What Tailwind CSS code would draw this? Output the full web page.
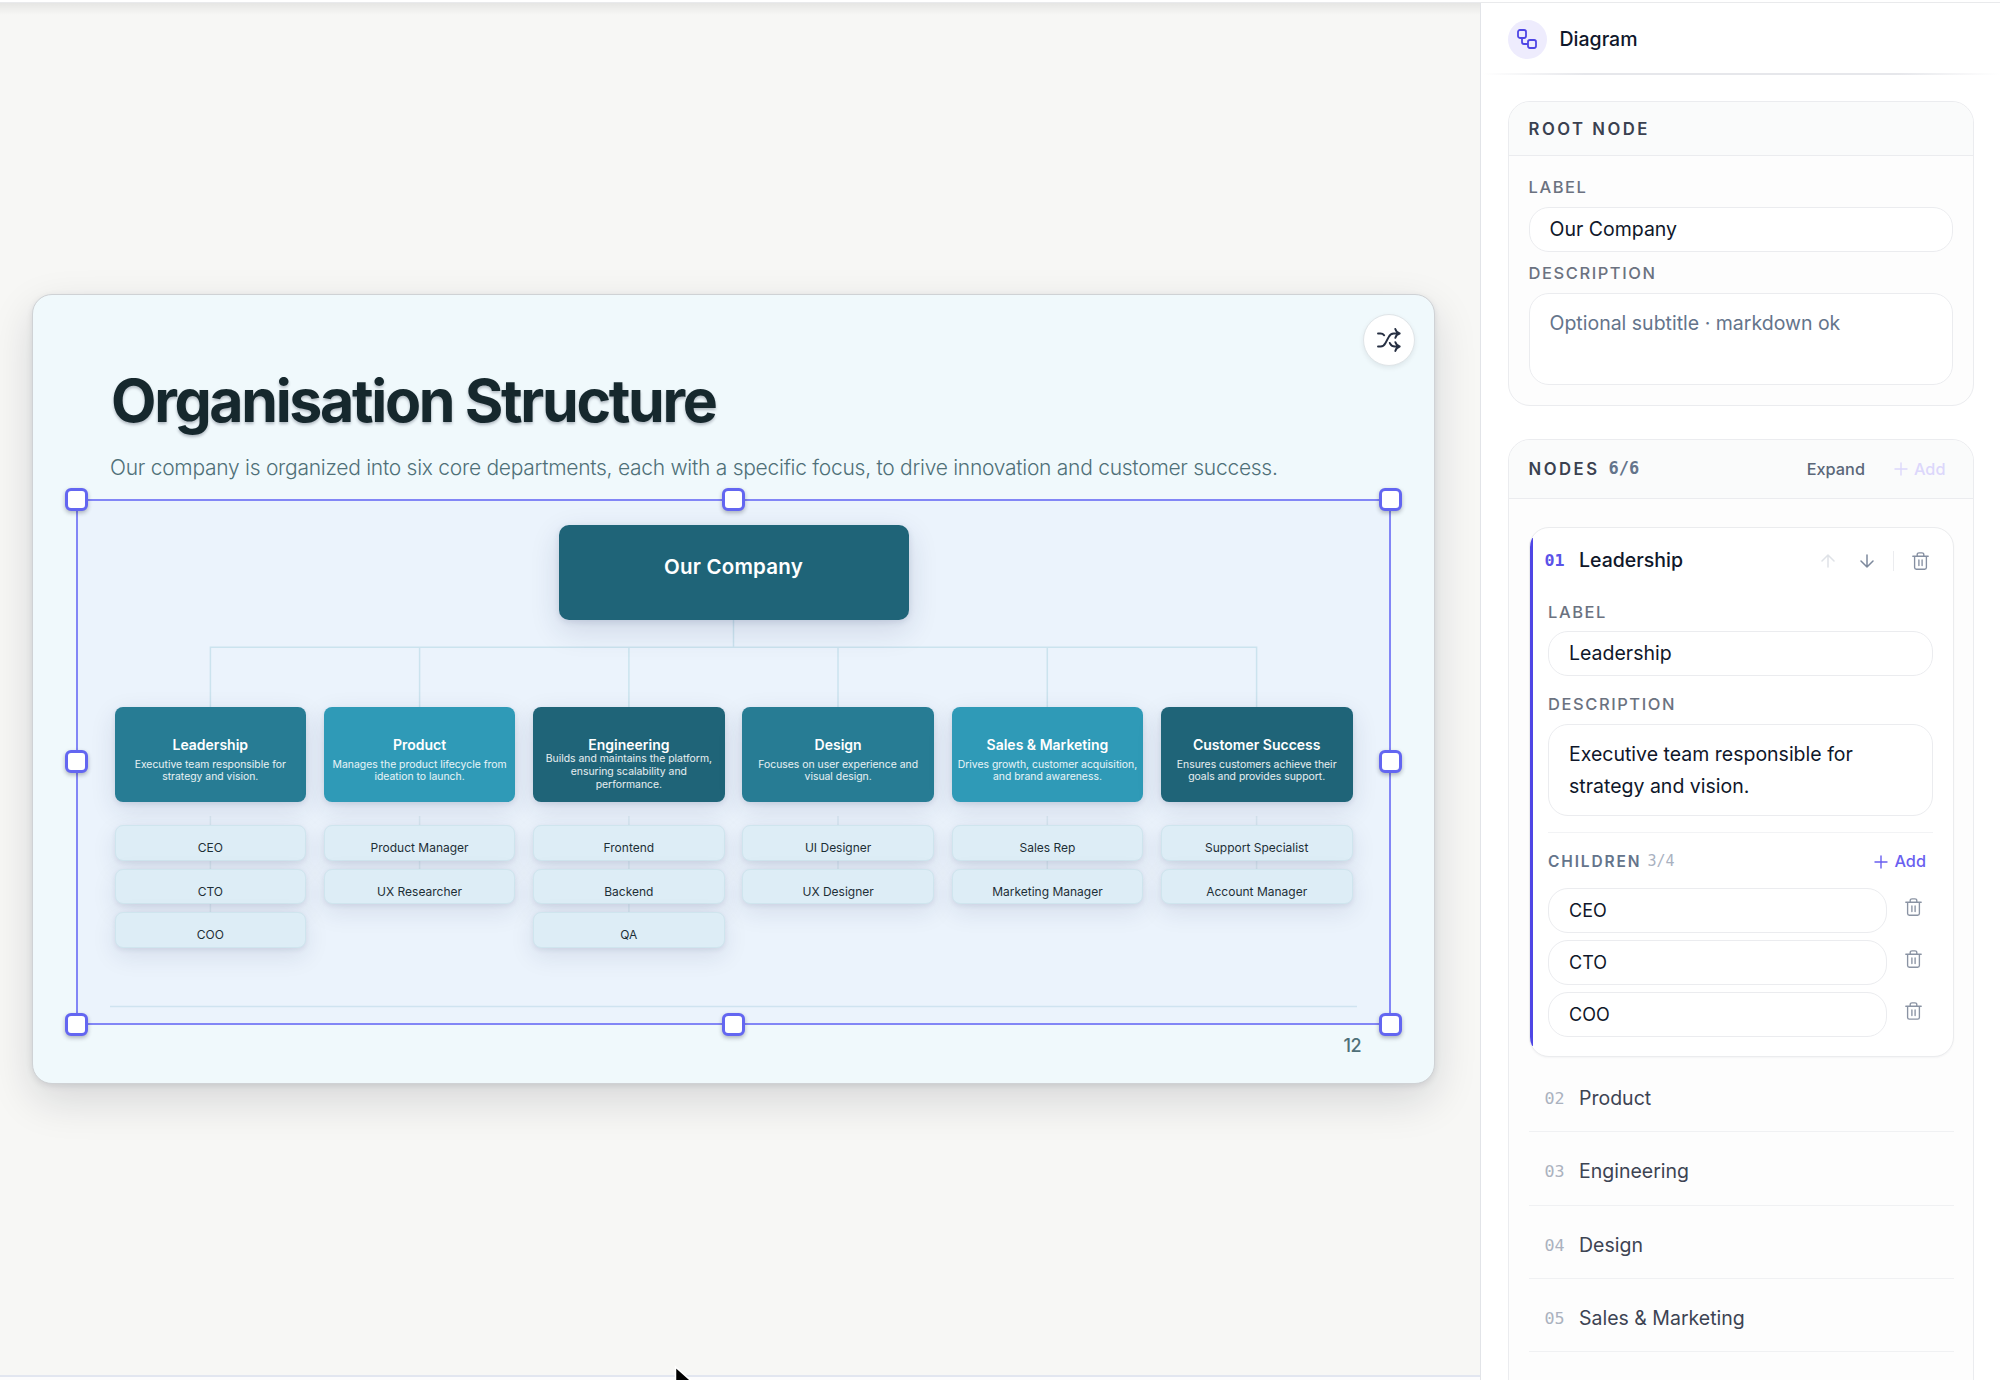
<!DOCTYPE html>
<html lang="en">
<head>
    <meta charset="UTF-8">
    <meta name="viewport" content="width=device-width, initial-scale=1.0">
    <title>Diagram Editor</title>
    <script src="https://cdn.jsdelivr.net/npm/@tailwindcss/browser@4"></script>
</head>
<body class="flex h-[1380px] w-[2000px] flex-col overflow-hidden bg-white font-['Inter',sans-serif] text-[#0f172a]">

<!-- Shared icons -->
<svg class="hidden">
    <symbol id="trash" viewBox="0 0 17 18" fill="none" stroke="currentColor" stroke-width="1.35" stroke-linecap="round" stroke-linejoin="round">
        <path d="M.8 4.2h15.4M2.6 4.4v11a1.8 1.8 0 0 0 1.8 1.8h8.2a1.8 1.8 0 0 0 1.8-1.8v-11M5.2 4V2.6A1.8 1.8 0 0 1 7 .8h3a1.8 1.8 0 0 1 1.8 1.8V4M6.9 8v5.6M10.1 8v5.6"/>
    </symbol>
    <symbol id="plus" viewBox="0 0 14 14" fill="none" stroke="currentColor" stroke-width="1.4" stroke-linecap="round">
        <path d="M7 1v12M1 7h12"/>
    </symbol>
</svg>

<div class="h-[3px] shrink-0 border-b border-[#e9eaec] bg-white"></div>

<div class="flex min-h-0 flex-1">
    <!-- Canvas -->
    <main class="relative flex w-[1480px] shrink-0 flex-col bg-[#f7f7f5]">
        <div class="absolute inset-x-0 top-0 h-3 bg-linear-to-b from-black/7 to-transparent"></div>

        <section class="relative mt-[291px] ml-8 h-[790px] w-[1403px] rounded-[20px] border border-[#cfd2d5] bg-[#f0f9fc] pt-[76px] shadow-[0_16px_44px_rgba(15,23,42,0.14),0_2px_6px_rgba(15,23,42,0.10)]">
            <h1 class="ml-[78px] h-[60px] w-max text-[59px] leading-[60px] font-bold tracking-[-0.0395em] text-[#16282d] text-shadow-[0_2px_3px_rgba(15,23,42,0.28)]">Organisation Structure</h1>
            <p class="mt-[22px] ml-[77px] h-[30px] w-max text-[21px] leading-[30px] font-light tracking-[-0.0126em] text-[#4f7078]">Our company is organized into six core departments, each with a specific focus, to drive innovation and customer success.</p>

            <!-- Selected diagram -->
            <div class="relative mt-4 ml-[43px] h-[526px] w-[1315px] border-2 border-[#8286f6] bg-[#ebf3fc]">
                <svg class="absolute top-0 left-0 h-[522px] w-[1311px]" fill="none" stroke="#cbe3ee" stroke-width="1.5">
                    <path d="M655.5 118v28M132.4 206V146.3H1178.6V206M341.6 146v60M550.9 146v60M760 146v60M969.3 146v60"/>
                    <path stroke="#d9e8f1" d="M132.4 315v100M341.6 315v60M550.9 315v100M760 315v60M969.3 315v60M1178.6 315v60"/>
                    <path stroke="#cfe3f0" stroke-width="1.3" d="M32 505.5H1279"/>
                </svg>

                <div class="relative mx-auto mt-6 flex h-[95px] w-[350px] justify-center rounded-[10px] bg-[#1f6478] pt-[28px] text-[20.5px] leading-7 font-semibold tracking-[0.01em] text-white shadow-[0_10px_30px_rgba(30,41,90,0.14),0_2px_6px_rgba(30,41,90,0.12)]"><span>Our Company</span></div>
                <div id="columns" class="relative mt-[87px] ml-[36.5px] grid w-[1238px] grid-cols-6 gap-[17.7px]"></div>

                <!-- Resize handles -->
                <i class="absolute -top-[13px] -left-[13px] size-[23px] rounded-[6px] border-[3px] border-[#6366f1] bg-white shadow-[0_2px_4px_rgba(15,23,42,0.3)]"></i>
                <i class="absolute -top-[13px] left-[644px] size-[23px] rounded-[6px] border-[3px] border-[#6366f1] bg-white shadow-[0_2px_4px_rgba(15,23,42,0.3)]"></i>
                <i class="absolute -top-[13px] -right-[13px] size-[23px] rounded-[6px] border-[3px] border-[#6366f1] bg-white shadow-[0_2px_4px_rgba(15,23,42,0.3)]"></i>
                <i class="absolute top-[249px] -left-[13px] size-[23px] rounded-[6px] border-[3px] border-[#6366f1] bg-white shadow-[0_2px_4px_rgba(15,23,42,0.3)]"></i>
                <i class="absolute top-[249px] -right-[13px] size-[23px] rounded-[6px] border-[3px] border-[#6366f1] bg-white shadow-[0_2px_4px_rgba(15,23,42,0.3)]"></i>
                <i class="absolute -bottom-[13px] -left-[13px] size-[23px] rounded-[6px] border-[3px] border-[#6366f1] bg-white shadow-[0_2px_4px_rgba(15,23,42,0.3)]"></i>
                <i class="absolute -bottom-[13px] left-[644px] size-[23px] rounded-[6px] border-[3px] border-[#6366f1] bg-white shadow-[0_2px_4px_rgba(15,23,42,0.3)]"></i>
                <i class="absolute -right-[13px] -bottom-[13px] size-[23px] rounded-[6px] border-[3px] border-[#6366f1] bg-white shadow-[0_2px_4px_rgba(15,23,42,0.3)]"></i>
            </div>

            <div class="mt-2 mr-[73px] text-right text-[18px] leading-[25px] font-medium tracking-[-0.03em] text-[#4f7078]">12</div>

            <button class="absolute top-[19px] right-[19px] flex size-[52px] items-center justify-center rounded-full border-[1.5px] border-[#e0e5e8] bg-white shadow-[0_2px_5px_rgba(15,23,42,0.08)]">
                <svg class="size-6" viewBox="0 0 24 24" fill="none" stroke="#262f42" stroke-width="1.9" stroke-linecap="round" stroke-linejoin="round">
                    <path d="M1 5.5h2.5c1.500 0 2.700.5 3.700 1.800M1 18.500h2.500c2.500 0 3.900-1.200 5-3.500l3.200-6c1.100-2.200 2.600-3.500 5.100-3.500h5.700M12.800 14.900l.4.900c1 1.900 2.500 2.700 4.700 2.700h4.600M18.300 1c.6 2.200 2 3.800 4.400 4.500-2.400.7-3.800 2.200-4.400 4.400M18.300 14.100c.6 2.200 2 3.700 4.400 4.400-2.400.7-3.800 2.300-4.400 4.500"/>
                </svg>
            </button>
        </section>

        <div class="absolute inset-x-0 bottom-0 h-[5px] border-t-2 border-[#e2e6f0] bg-[#fcfcfd]"></div>
    </main>

    <!-- Properties panel -->
    <aside class="flex w-[520px] flex-col border-l border-[#e2e4e8] bg-white px-[26.5px]">
        <header class="flex h-[70px] shrink-0 items-center gap-[13px] pt-[2px]">
            <span class="flex size-[39px] items-center justify-center rounded-full bg-[#eeecfd]">
                <svg class="size-5" viewBox="0 0 20 20" fill="none" stroke="#4f46e5" stroke-width="1.8" stroke-linejoin="round">
                    <rect x="1" y="1" width="8" height="8" rx="1.9"/><rect x="11" y="11" width="8" height="8" rx="1.9"/><path d="M5 9v4a2 2 0 0 0 2 2h4"/>
                </svg>
            </span>
            <h2 class="text-[19.5px] leading-7 font-medium">Diagram</h2>
        </header>
        <div class="-mx-[26px] h-[2px] shrink-0 bg-[linear-gradient(90deg,transparent,#e6e7eb_20%,#e6e7eb_80%,transparent)]"></div>

        <!-- Root node -->
        <section class="mt-[26px] h-[305px] w-[466px] shrink-0 overflow-hidden rounded-[22px] border border-[#ebecef] bg-[#fdfdfd]">
            <h3 class="h-[54px] border-b border-[#ebecef] bg-[#fafbfb] pl-5 text-[16.7px] leading-[54px] font-semibold tracking-[0.15em] text-[#3a4150]">ROOT NODE</h3>
            <div class="flex flex-col pr-5 pl-5">
                <label class="mt-[19px] h-6 text-[16.5px] leading-6 font-medium tracking-[0.095em] text-[#6b7280]">LABEL</label>
                <div class="mt-2 h-[45px] w-[424px] rounded-[20px] border border-[#ebecef] bg-white pl-5 text-[19.5px] leading-[43px]">Our Company</div>
                <label class="mt-[9px] h-6 text-[16.5px] leading-6 font-medium tracking-[0.095em] text-[#6b7280]">DESCRIPTION</label>
                <div class="mt-2 h-[92px] w-[424px] rounded-[20px] border border-[#ebecef] bg-white px-5 pt-[13px] text-[19.5px] leading-8 text-[#64748b]">Optional subtitle · markdown ok</div>
            </div>
        </section>

        <!-- Nodes -->
        <section class="mt-[33px] h-[1000px] w-[466px] shrink-0 overflow-hidden rounded-[22px] border border-[#ebecef] bg-[#fdfdfd]">
            <div class="flex h-[59px] items-center border-b border-[#ebecef] bg-[#fafbfb] pr-[27px] pl-5">
                <h3 class="pt-px text-[16.7px] font-semibold tracking-[0.15em] text-[#3a4150]">NODES</h3>
                <span class="ml-[9px] font-['DejaVu_Sans_Mono',monospace] text-[17px] font-bold text-[#64748b]">6/6</span>
                <button class="ml-auto text-[16.3px] font-medium text-[#5b6779]">Expand</button>
                <button class="ml-[29px] flex items-center gap-[6px] text-[16.3px] font-medium text-[#dcd7fb]"><svg class="size-[14px]"><use href="#plus"/></svg>Add</button>
            </div>

            <div class="px-5 pt-[28px]">
                <div class="relative h-[530px] w-[425px] overflow-hidden rounded-[20px] border border-[#ebecee] bg-white shadow-[0_1px_2px_rgba(15,23,42,0.04)]">
                    <div class="absolute top-[10px] bottom-[10px] -left-px w-[4px] bg-[#4f46e5]"></div>
                    <div class="flex h-[66px] items-center pr-[24px] pl-[15px]">
                        <span class="w-[34.5px] font-['DejaVu_Sans_Mono',monospace] text-[16.7px] font-bold text-[#5b53e8]">01</span>
                        <span class="text-[19.5px] font-medium">Leadership</span>
                        <svg class="ml-auto size-[14px] text-[#dfe2e7]" viewBox="0 0 14 14" fill="none" stroke="currentColor" stroke-width="1.5" stroke-linecap="round" stroke-linejoin="round"><path d="M7 13V1M1 7l6-6 6 6"/></svg>
                        <svg class="ml-[25px] size-[14px] text-[#7d899c]" viewBox="0 0 14 14" fill="none" stroke="currentColor" stroke-width="1.5" stroke-linecap="round" stroke-linejoin="round"><path d="M7 1v12M1 7l6 6 6-6"/></svg>
                        <span class="ml-[19px] h-5 w-px bg-[#ebecef]"></span>
                        <svg class="ml-[18px] h-[18px] w-[17px] text-[#858fa1]"><use href="#trash"/></svg>
                    </div>

                    <div class="ml-[18.5px] flex w-[385px] flex-col">
                        <label class="mt-[6px] h-6 text-[16.5px] leading-6 font-medium tracking-[0.095em] text-[#6b7280]">LABEL</label>
                        <div class="mt-[7px] h-[45px] rounded-[20px] border border-[#ebecef] bg-white pl-5 text-[19.5px] leading-[43px]">Leadership</div>
                        <label class="mt-4 h-6 text-[16.5px] leading-6 font-medium tracking-[0.095em] text-[#6b7280]">DESCRIPTION</label>
                        <div class="mt-2 h-[92px] rounded-[20px] border border-[#ebecef] bg-white px-5 pt-[13px] text-[19.5px] leading-8">Executive team responsible for strategy and vision.</div>
                        <div class="mt-4 flex h-[56px] items-center border-t border-[#f2f3f5] pt-[2px] pr-[7px]">
                            <span class="text-[15.5px] font-semibold tracking-[0.12em] text-[#64748b]">CHILDREN</span>
                            <span class="ml-[6px] font-['DejaVu_Sans_Mono',monospace] text-[15px] text-[#a9b1bf]">3/4</span>
                            <button class="ml-auto flex items-center gap-[6px] text-[16.3px] font-medium text-[#6a5ff0]"><svg class="size-[14px]"><use href="#plus"/></svg>Add</button>
                        </div>
                        <div id="children" class="flex flex-col gap-[7px]"></div>
                    </div>
                </div>
                <div id="rows" class="mt-[2px] w-[425px]"></div>
            </div>
        </section>
    </aside>
</div>

<!-- Mouse pointer -->
<svg class="absolute top-[1365px] left-[673px] h-[15px] w-[24px]" viewBox="0 0 24 15"><path d="M2.5 2v30l26-7z" fill="#000" stroke="#fff" stroke-width="1.5"/></svg>

<script>
    const departments = [
        { name: "Leadership", bg: "bg-[#277c94]", lines: ["Executive team responsible for", "strategy and vision."], roles: ["CEO", "CTO", "COO"] },
        { name: "Product", bg: "bg-[#2f9ab7]", lines: ["Manages the product lifecycle from", "ideation to launch."], roles: ["Product Manager", "UX Researcher"] },
        { name: "Engineering", bg: "bg-[#1f6478]", lines: ["Builds and maintains the platform,", "ensuring scalability and", "performance."], roles: ["Frontend", "Backend", "QA"] },
        { name: "Design", bg: "bg-[#277c94]", lines: ["Focuses on user experience and", "visual design."], roles: ["UI Designer", "UX Designer"] },
        { name: "Sales & Marketing", bg: "bg-[#2f9ab7]", lines: ["Drives growth, customer acquisition,", "and brand awareness."], roles: ["Sales Rep", "Marketing Manager"] },
        { name: "Customer Success", bg: "bg-[#1f6478]", lines: ["Ensures customers achieve their", "goals and provides support."], roles: ["Support Specialist", "Account Manager"] }
    ];

    document.getElementById("columns").innerHTML = departments.map(d => `
        <div class="flex flex-col text-center whitespace-nowrap">
            <div class="${d.bg} h-[95px] rounded-[8px] pt-[28px] text-white shadow-[0_8px_26px_rgba(30,41,90,0.12),0_2px_5px_rgba(30,41,90,0.10)]">
                <div class="h-5 text-[14px] leading-5 font-semibold">${d.name.replace("&", "&amp;")}</div>
                <div class="${d.lines.length > 2 ? "-mt-[3px] leading-[13px]" : "mt-[4px] leading-[12px]"} text-[10.4px] text-white/90">${d.lines.join("<br>")}</div>
            </div>
            <div class="mt-[23px] flex flex-col gap-[8px]">
                ${d.roles.map(r => `<div class="h-[35.7px] rounded-[8px] border border-[#cfe5ee] bg-[#ddedf6] pt-[12px] text-[12px] leading-5 text-[#1d2f36] shadow-[0_8px_24px_rgba(30,41,90,0.10),0_2px_5px_rgba(30,41,90,0.08)]">${r}</div>`).join("")}
            </div>
        </div>`).join("");

    document.getElementById("children").innerHTML = departments[0].roles.map(r => `
        <div class="flex h-[45px]">
            <div class="w-[339px] rounded-[20px] border border-[#ebecef] bg-white pl-5 text-[18px] leading-[43px]">${r}</div>
            <svg class="mt-[10px] ml-[18px] h-[18px] w-[17px] text-[#8a93a3]"><use href="#trash"/></svg>
        </div>`).join("");

    // Collapsed nodes that fit below the open one
    document.getElementById("rows").innerHTML = departments.slice(1, 5).map((d, i) => `
        <div class="flex h-[73.25px] items-center border-b border-[#f0f1f3] pt-[7px] pl-4 text-[#3d4453]">
            <span class="w-[34.5px] font-['DejaVu_Sans_Mono',monospace] text-[16.7px] text-[#abb2bf]">0${i + 2}</span>
            <span class="text-[19.5px]">${d.name.replace("&", "&amp;")}</span>
        </div>`).join("");
</script>

</body>
</html>
